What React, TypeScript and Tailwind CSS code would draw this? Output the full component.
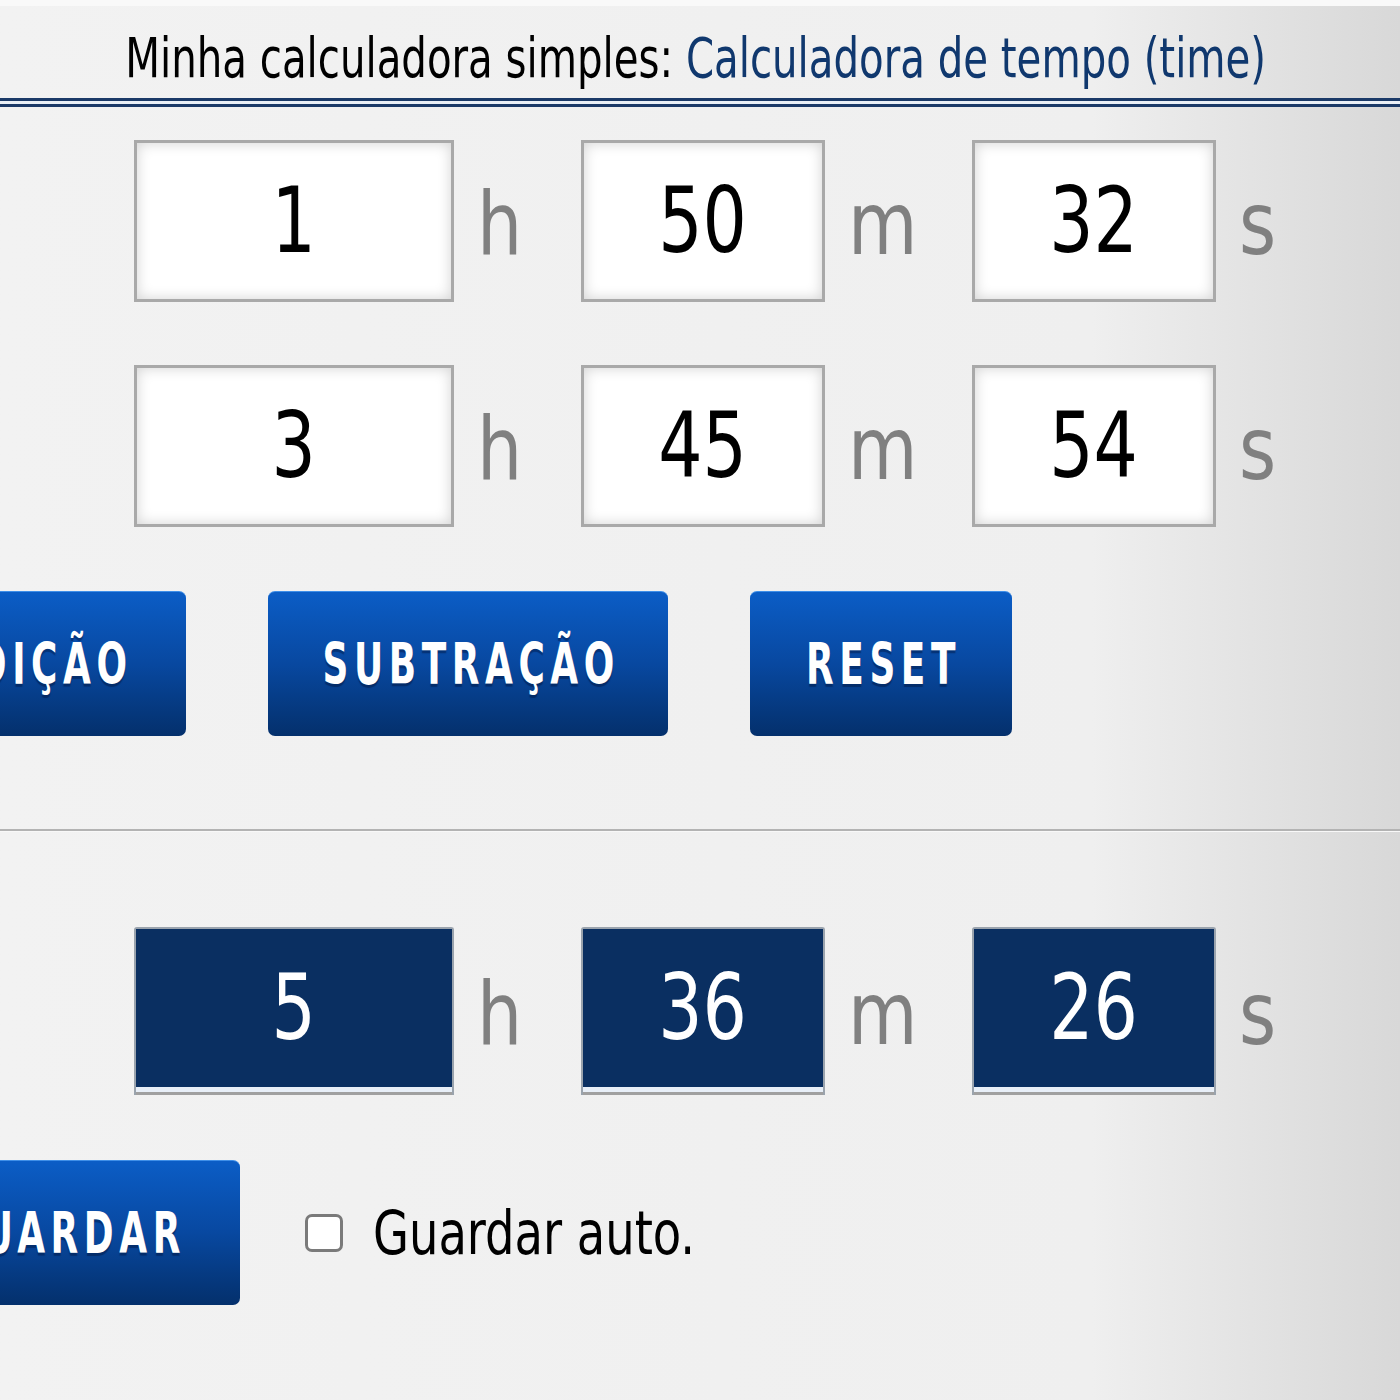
import React from "react";

const FONT = "font-['DejaVu_Sans_Condensed','DejaVu_Sans',sans-serif]";

function InputBox({ value, w, dark }: { value: string; w: string; dark?: boolean }) {
  if (dark) {
    return (
      <div className={`${w} h-[168px] flex flex-col rounded-t-[3px] border-x-2 border-t-2 border-[#9aa3ad] bg-[#a0a0a0] pb-[3px]`}>
        <div className="flex-1 bg-[#0a2f61] flex items-center justify-center text-white text-[90px] leading-none">
          <span className="inline-block scale-x-[0.86]">{value}</span>
        </div>
        <div className="h-[5px] bg-[#e8eff8]"></div>
      </div>
    );
  }
  return (
    <div className={`${w} h-[162px] border-[3px] border-[#a9a9a9] bg-white shadow-[inset_0_0_14px_rgba(0,0,0,0.18)] flex items-center justify-center text-black text-[90px] leading-none`}>
      <span className="inline-block scale-x-[0.86]">{value}</span>
    </div>
  );
}

function Unit({ u, w }: { u: string; w: string }) {
  return (
    <div className={`${w} pl-[23px] text-[88px] leading-none text-[#808080] pt-[6px]`}>
      <span className="inline-block scale-x-[0.9] origin-left">{u}</span>
    </div>
  );
}

function Row({ vals, dark }: { vals: string[]; dark?: boolean }) {
  return (
    <div className="flex items-center pl-[134px]">
      <InputBox value={vals[0]} w="w-[320px]" dark={dark} />
      <Unit u="h" w="w-[127px]" />
      <InputBox value={vals[1]} w="w-[244px]" dark={dark} />
      <Unit u="m" w="w-[147px]" />
      <InputBox value={vals[2]} w="w-[244px]" dark={dark} />
      <Unit u="s" w="w-[100px]" />
    </div>
  );
}

function Btn({ label, w }: { label: string; w: string }) {
  return (
    <div
      className={`${w} h-[145px] shrink-0 rounded-[7px] bg-gradient-to-b from-[#0b5dc6] via-[#0848a0] to-[#04306c] border-t border-[#3f8fe8] flex items-center justify-center text-white font-bold text-[57px] leading-none whitespace-nowrap [text-shadow:0_3px_1px_rgba(0,20,60,0.45)]`}
    >
      <span className="inline-block scale-x-[0.7] tracking-[8px] pl-[8px]">{label}</span>
    </div>
  );
}

export default function App() {
  return (
    <div
      className={`${FONT} w-[1400px] h-[1400px] overflow-hidden bg-gradient-to-r from-[#f2f2f2] via-[#efefef] via-78% to-[#d8d8d8] flex flex-col`}
    >
      <div className="h-[6px] bg-[#f9f9f9]"></div>
      <div className="h-[92px] pt-[25px] flex justify-center whitespace-nowrap text-[55px] leading-none">
        <span className="inline-block scale-x-[0.814] pr-[10px]">
          <span className="text-black">Minha calculadora simples: </span>
          <span className="text-[#10386e]">Calculadora de tempo (time)</span>
        </span>
      </div>
      <div className="h-[3px] bg-[#1b3a68]"></div>
      <div className="h-[3px] bg-[#eaf0f7]"></div>
      <div className="h-[3px] bg-[#1b3a68]"></div>

      <div className="mt-[33px]">
        <Row vals={["1", "50", "32"]} />
      </div>
      <div className="mt-[63px]">
        <Row vals={["3", "45", "54"]} />
      </div>

      <div className="mt-[64px] flex gap-[82px] ml-[-116px]">
        <Btn label="ADIÇÃO" w="w-[302px]" />
        <Btn label="SUBTRAÇÃO" w="w-[400px]" />
        <Btn label="RESET" w="w-[262px]" />
      </div>

      <div className="mt-[93px] h-[2px] bg-[#b3b3b3]"></div>
      <div className="h-[1px] bg-[#f8f8f8]"></div>

      <div className="mt-[95px]">
        <Row vals={["5", "36", "26"]} dark />
      </div>

      <div className="mt-[65px] flex items-center ml-[-112px]">
        <Btn label="GUARDAR" w="w-[352px]" />
        <div className="ml-[65px] w-[38px] h-[38px] rounded-[7px] border-[3px] border-[#7a7a7a] bg-white shrink-0"></div>
        <div className="ml-[30px] text-[60px] leading-none text-black whitespace-nowrap">
          <span className="inline-block scale-x-[0.86] origin-left">Guardar auto.</span>
        </div>
      </div>
    </div>
  );
}
